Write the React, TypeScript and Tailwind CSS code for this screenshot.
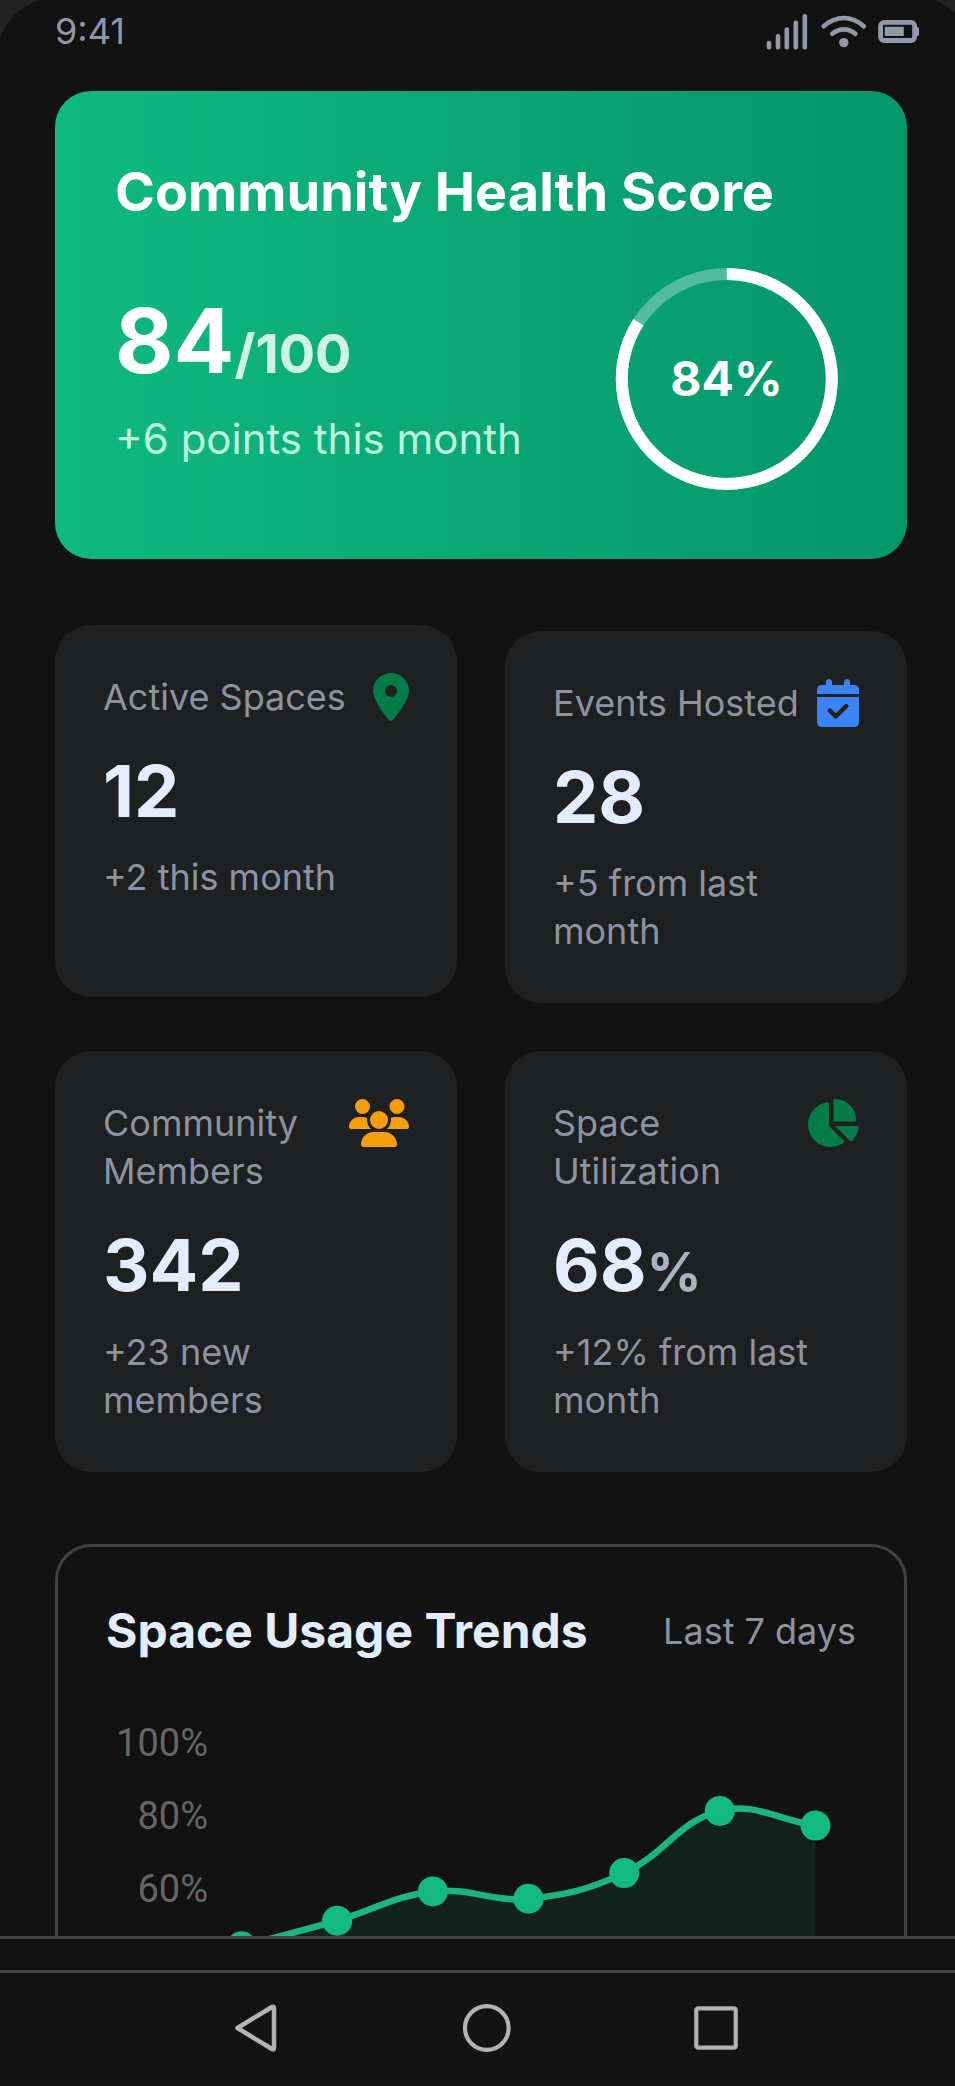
import type { ReactNode } from "react";
import { FaCalendarCheck, FaChartPie, FaLocationDot, FaUsers } from "react-icons/fa6";

function StatusIcons() {
  return (
    <svg width="156" height="40" viewBox="764 10 156 40" fill="none" stroke="#9499a9" strokeLinecap="round">
      <g strokeWidth="4.6">
        <path d="M769 42v4.3M778 35.4v10.9M786.8 28.6v17.7M795.8 21.8v24.5M804.8 15.2v31.1" />
      </g>
      <g strokeWidth="4.6">
        <path d="M823.8 25.3c12.4-11 27.600-11 40 0" />
        <path d="M832.300 32.700c7-5.800 16-5.800 23 0" />
      </g>
      <circle cx="843.800" cy="41.600" r="4.700" fill="#9499a9" stroke="none" />
      <rect x="880.600" y="21.300" width="34" height="18.200" rx="3.500" strokeWidth="4.800" />
      <rect x="884.800" y="25.800" width="19" height="9.200" fill="#9499a9" stroke="none" />
      <path d="M917.300 27.600v5.800" strokeWidth="3.400" />
    </svg>
  );
}

function ScoreRing({ value }: { value: number }) {
  const r = 105;
  const c = 2 * Math.PI * r;
  return (
    <svg width="240" height="240" viewBox="0 0 240 240" className="shrink-0">
      <circle cx="119.800" cy="120" r={r} fill="none" stroke="#fff" strokeOpacity="0.3" strokeWidth="12" />
      <circle
        cx="119.800"
        cy="120"
        r={r}
        fill="none"
        stroke="#fff"
        strokeWidth="12"
        strokeDasharray={`${(c * value) / 100} ${c}`}
        transform="rotate(-90 119.800 120)"
      />
      <text x="119.500" y="136.500" textAnchor="middle" fill="#fff" className="text-[48px] font-bold">
        {value}%
      </text>
    </svg>
  );
}

function StatCard({
  label,
  value,
  unit,
  note,
  icon,
  raised,
}: {
  label: string;
  value: string;
  unit?: string;
  note: string;
  icon: ReactNode;
  raised?: boolean;
}) {
  return (
    <div
      className={
        raised
          ? "-translate-y-1.5 rounded-[36px] bg-[#1f2021] p-12 shadow-[0_9px_18px_rgba(0,0,0,0.06)]"
          : "rounded-[36px] bg-[#1f2021] p-12"
      }
    >
      <div className="flex items-start justify-between">
        <div className="text-[36px] leading-[48px] text-[#8e93a1]">{label}</div>
        <div className="shrink-0">{icon}</div>
      </div>
      <div className="mt-6 text-[72px] leading-[92.500px] font-bold text-[#e3edff]">
        {value}
        {unit && <span className="text-[54px] leading-none text-[#a9b3c4]">{unit}</span>}
      </div>
      <div className="mt-4 text-[36px] leading-[48px] text-[#8e93a1]">{note}</div>
    </div>
  );
}

const usage = [45, 52, 60, 58, 65, 82, 78];
const ticks = [100, 80, 60];
const yOf = (v: number) => 48 + (100 - v) * 3.66;
const points = usage.map((v, i) => ({ x: 135.500 + i * 95.660, y: yOf(v) }));

function smoothPath(tension: number) {
  const controls = points.map((p, i) => {
    const a = points[Math.max(0, i - 1)];
    const b = points[Math.min(points.length - 1, i + 1)];
    const d1 = Math.hypot(p.x - a.x, p.y - a.y);
    const d2 = Math.hypot(b.x - p.x, b.y - p.y);
    const f1 = (tension * d1) / (d1 + d2);
    const f2 = (tension * d2) / (d1 + d2);
    return {
      inX: p.x - f1 * (b.x - a.x),
      inY: p.y - f1 * (b.y - a.y),
      outX: p.x + f2 * (b.x - a.x),
      outY: p.y + f2 * (b.y - a.y),
    };
  });
  return points.slice(1).reduce((d, p, i) => {
    const c = controls[i];
    const n = controls[i + 1];
    return `${d} C${c.outX} ${c.outY} ${n.inX} ${n.inY} ${p.x} ${p.y}`;
  }, `M${points[0].x} ${points[0].y}`);
}

function UsageChart() {
  const line = smoothPath(0.4);
  const left = points[0].x;
  const right = points[points.length - 1].x;
  return (
    <svg width="750" height="480" viewBox="0 0 750 480" className="block">
      {ticks.map((t) => (
        <g key={t}>
          <path d={`M${left - 23} ${yOf(t)}H${right}`} stroke="#111111" strokeWidth="3" />
          <text
            x="102"
            y={yOf(t) + 10.500}
            textAnchor="end"
            fill="#666"
            className="font-['Roboto',sans-serif] text-[38px]"
          >
            {t}%
          </text>
        </g>
      ))}
      <path d={`M${left} ${yOf(100)}V${yOf(0)}`} stroke="#111111" strokeWidth="3" />
      <path d={`${line} V${yOf(0)} H${left} Z`} fill="#10b981" fillOpacity="0.1" />
      <path d={line} fill="none" stroke="#1bb583" strokeWidth="6.500" />
      {points.map((p) => (
        <circle key={p.x} cx={p.x} cy={p.y} r="15" fill="#12b981" />
      ))}
    </svg>
  );
}

export default function App() {
  return (
    <div className="relative flex h-[2086px] w-[955px] flex-col overflow-hidden bg-[#121212] font-['Inter',sans-serif]">
      <svg width="955" height="40" viewBox="0 0 955 40" className="pointer-events-none absolute top-0 left-0">
        <path d="M0 0H40Q11 9 0 38Z" fill="#232325" />
        <path d="M955 0H934Q946 4.500 955 13Z" fill="#232325" />
      </svg>

      <header className="flex h-[62px] shrink-0 items-center justify-between pr-[35px] pl-[55px]">
        <span className="text-[36px] leading-[48px] text-[#9297a7]">9:41</span>
        <StatusIcons />
      </header>

      <main className="flex min-h-0 flex-1 flex-col gap-[72px] overflow-hidden pt-[28.500px] pr-12 pl-[55px]">
        <section className="h-[468px] shrink-0 rounded-[36px] bg-[linear-gradient(90deg,#10b981,#059669)] p-[60px]">
          <h1 className="mb-[26px] text-[54px] leading-[82px] font-bold whitespace-nowrap text-white">
            Community Health Score
          </h1>
          <div className="flex items-center justify-between">
            <div>
              <div className="text-[90px] leading-[104px] font-bold text-white">
                84<span className="text-[54px] leading-none text-[#d0f1e5]">/100</span>
              </div>
              <div className="mt-4 text-[42px] leading-[60px] whitespace-nowrap text-[#bcf5dd]">
                +6 points this month
              </div>
            </div>
            <ScoreRing value={84} />
          </div>
        </section>

        <section className="grid shrink-0 grid-cols-2 gap-12">
          <StatCard
            raised
            label="Active Spaces"
            value="12"
            note="+2 this month"
            icon={<FaLocationDot className="h-12 w-9 text-[#037c49]" />}
          />
          <StatCard
            label="Events Hosted"
            value="28"
            note="+5 from last month"
            icon={<FaCalendarCheck className="h-12 w-[42px] text-[#3c83f6]" />}
          />
          <StatCard
            label="Community Members"
            value="342"
            note="+23 new members"
            icon={<FaUsers className="h-12 w-[60px] text-[#f59e0b]" />}
          />
          <StatCard
            label="Space Utilization"
            value="68"
            unit="%"
            note="+12% from last month"
            icon={<FaChartPie className="h-12 w-[54px] text-[#037c49]" />}
          />
        </section>

        <section className="shrink-0 rounded-[36px] border-[3px] border-[#424242] p-12">
          <div className="mb-[30px] flex items-center justify-between">
            <h2 className="text-[48px] leading-[72px] font-bold text-[#e3edff]">Space Usage Trends</h2>
            <span className="text-[36px] leading-[48px] text-[#8e93a1]">Last 7 days</span>
          </div>
          <UsageChart />
        </section>
      </main>

      <div className="h-[34px] shrink-0 border-t-[3px] border-[#424343]" />
      <nav className="flex h-[116px] shrink-0 items-start gap-[181px] border-t-[3px] border-[#424343] bg-[#131313] pt-[31px] pl-[234px]">
        <svg width="48" height="48" viewBox="0 0 48 48" fill="none" stroke="#b3b3b3" strokeWidth="4.500">
          <path d="M3.500 24 38 3Q40 2 40 4.500V43.500Q40 46 38 45Z" strokeLinejoin="round" />
        </svg>
        <svg width="48" height="48" viewBox="0 0 48 48" fill="none" stroke="#b3b3b3" strokeWidth="4.200">
          <circle cx="23.800" cy="24" r="21.800" />
        </svg>
        <svg width="48" height="48" viewBox="0 0 48 48" fill="none" stroke="#b3b3b3" strokeWidth="4.200">
          <rect x="4.300" y="4.300" width="39.400" height="39.400" rx="2" />
        </svg>
      </nav>
    </div>
  );
}
